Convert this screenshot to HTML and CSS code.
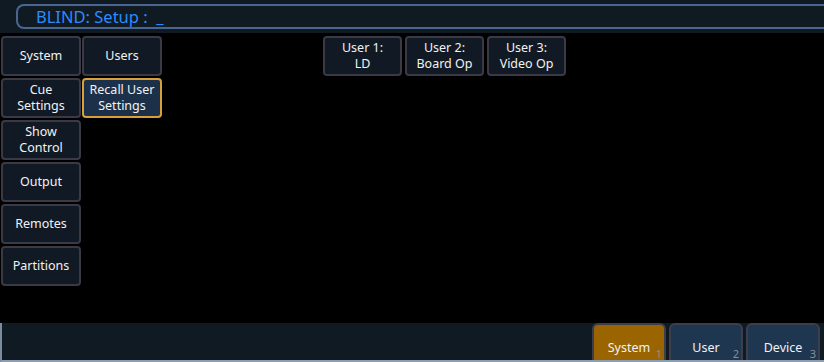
FILE: index.html
```html
<!DOCTYPE html>
<html lang="en">
<head>
  <meta charset="UTF-8">
  <title>Blind Setup</title>
  <link rel="stylesheet" href="styles.css">
</head>
<body>
  <header class="top">
    <div class="cmdline">BLIND: Setup : &nbsp;_</div>
  </header>

  <main class="setup">
    <ul class="col categories">
      <li><a class="key" href="#">System</a></li>
      <li><a class="key" href="#">Cue<br>Settings</a></li>
      <li><a class="key" href="#">Show<br>Control</a></li>
      <li><a class="key" href="#">Output</a></li>
      <li><a class="key" href="#">Remotes</a></li>
      <li><a class="key" href="#">Partitions</a></li>
    </ul>
    <ul class="col sub">
      <li><a class="key" href="#">Users</a></li>
      <li><a class="key active" href="#">Recall User<br>Settings</a></li>
    </ul>
    <ul class="users">
      <li><a class="key" href="#">User 1:<br>LD</a></li>
      <li><a class="key" href="#">User 2:<br>Board Op</a></li>
      <li><a class="key" href="#">User 3:<br>Video Op</a></li>
    </ul>
  </main>

  <footer class="tabs">
    <a class="tab selected" href="#">System<span class="num">1</span></a>
    <a class="tab" href="#">User<span class="num">2</span></a>
    <a class="tab" href="#">Device<span class="num">3</span></a>
  </footer>
</body>
</html>
```

FILE: styles.css
```css
html {
  box-sizing: border-box;
  font-family: "Noto Sans", "DejaVu Sans", sans-serif;
}
*, *::before, *::after {
  box-sizing: inherit;
}

body {
  margin: 0;
  height: 100vh;
  background: #000;
  display: grid;
  grid-template-rows: 33px 1fr 39px;
  overflow: hidden;
}

ul {
  list-style: none;
  margin: 0;
  padding: 0;
}

.top {
  background: #101a23;
  padding: 4px 0 0 16px;
}
.cmdline {
  height: 25px;
  border: 2px solid #4a6690;
  border-right: none;
  border-radius: 8px 0 0 8px;
  color: #2a8cff;
  font-size: 16.5px;
  line-height: 21px;
  padding-left: 18px;
}

.setup {
  display: flex;
  align-items: flex-start;
  padding: 3px 0 0 1px;
}
.col {
  display: flex;
  flex-direction: column;
  gap: 2px;
  width: 80px;
  margin-right: 1px;
}
.users {
  display: flex;
  gap: 3px;
  margin-left: 160px;
}
.users li {
  width: 79px;
}

.key {
  display: flex;
  align-items: center;
  justify-content: center;
  height: 40px;
  background: #111a24;
  border: 2px solid #3a3a46;
  border-radius: 4px;
  color: #f2f2f2;
  text-decoration: none;
  text-align: center;
  font-size: 12.5px;
  line-height: 16px;
}
.key.active {
  background: #1c3149;
  border-color: #d7a03a;
}

.tabs {
  background: #101a23;
  border-left: 2px solid #7a8ba0;
  border-bottom: 2px solid #8e9db0;
  display: flex;
  justify-content: flex-end;
  align-items: stretch;
  gap: 3px;
  padding-right: 4px;
}
.tab {
  position: relative;
  width: 74px;
  background: #1f3650;
  border: 2px solid #3c3e4c;
  border-bottom: none;
  border-radius: 6px 6px 0 0;
  color: #f2f2f2;
  text-decoration: none;
  font-size: 12.5px;
  display: flex;
  justify-content: center;
  align-items: flex-end;
  padding-bottom: 4px;
}
.tab.selected {
  background: #9a6500;
}
.num {
  position: absolute;
  right: 2px;
  bottom: -1px;
  font-size: 11px;
  color: #8a8e9a;
}
```
